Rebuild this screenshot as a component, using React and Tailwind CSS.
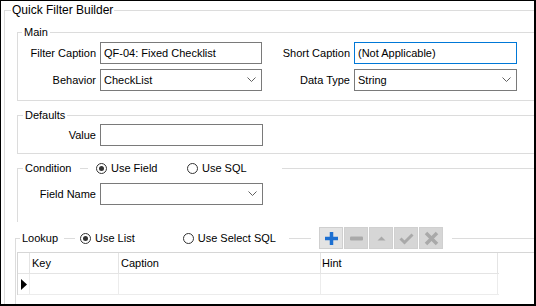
import React from "react";

const line = "h-px bg-[#dcdcdc] shrink-0";

const Radio = ({ checked, label, className = "" }) => (
  <span className={`flex items-center shrink-0 whitespace-nowrap ${className}`}>
    <span className="w-[11px] h-[11px] rounded-full border border-[#333] flex items-center justify-center bg-white">
      {checked && <span className="w-[5px] h-[5px] rounded-full bg-[#333]" />}
    </span>
    <span className="ml-[4px]">{label}</span>
  </span>
);

const Chevron = () => (
  <svg width="9" height="6" viewBox="0 0 9 6" className="mr-[5px]">
    <path d="M0.5 0.5 L4.5 4.5 L8.5 0.5" fill="none" stroke="#606060" strokeWidth="1" />
  </svg>
);

const Edit = ({ value = "", width, focused, combo }) => (
  <div
    className={`h-[22px] flex items-center justify-between bg-white border ${
      focused ? "border-[#0078d7]" : "border-[#7a7a7a]"
    } ${width}`}
  >
    <span className="pl-[3px] whitespace-nowrap">{value}</span>
    {combo && <Chevron />}
  </div>
);

const ToolButton = ({ children, active }) => (
  <div
    className={`w-[24px] h-[22px] flex items-center justify-center border ${
      active ? "bg-[#e3e3e3] border-[#cfcfcf]" : "bg-[#d6d6d6] border-[#d0d0d0]"
    }`}
  >
    {children}
  </div>
);

export default function App() {
  return (
    <div
      className="w-[536px] h-[306px] overflow-hidden bg-white border-l border-t border-r-2 border-b-2 border-black text-[11px] text-black"
      style={{ fontFamily: '"Liberation Sans", Arial, sans-serif' }}
    >
      {/* Quick Filter Builder */}
      <fieldset className="ml-[3px] mt-px w-[600px] h-[320px] border border-[#dcdcdc]">
        <legend className="ml-[6px] px-px h-4 leading-4 text-[12px]">Quick Filter Builder</legend>

        {/* Main */}
        <fieldset className="ml-[12px] mt-[6px] w-[560px] border border-[#dcdcdc] pt-[2px] pb-[9px]">
          <legend className="ml-[4px] px-[2px] h-4 leading-4">Main</legend>
          <div className="flex flex-col gap-[5px]">
            <div className="flex items-center">
              <span className="w-[78px] text-right">Filter Caption</span>
              <span className="ml-[4px]"><Edit width="w-[162px]" value="QF-04: Fixed Checklist" /></span>
              <span className="w-[88px] text-right">Short Caption</span>
              <span className="ml-[4px]"><Edit width="w-[163px]" value="(Not Applicable)" focused /></span>
            </div>
            <div className="flex items-center">
              <span className="w-[78px] text-right">Behavior</span>
              <span className="ml-[4px]"><Edit width="w-[162px]" value="CheckList" combo /></span>
              <span className="w-[88px] text-right">Data Type</span>
              <span className="ml-[4px]"><Edit width="w-[163px]" value="String" combo /></span>
            </div>
          </div>
        </fieldset>

        {/* Defaults */}
        <fieldset className="ml-[12px] mt-[6px] w-[560px] border border-[#dcdcdc] pt-px pb-[7px]">
          <legend className="ml-[5px] px-[2px] h-4 leading-4">Defaults</legend>
          <div className="flex items-center">
            <span className="w-[78px] text-right">Value</span>
            <span className="ml-[4px]"><Edit width="w-[163px]" /></span>
          </div>
        </fieldset>

        {/* Condition */}
        <fieldset className="ml-[12px] mt-[6px] w-[560px] border border-b-0 border-[#dcdcdc] pt-[7px] pb-[17px]">
          <legend className="ml-[5px] pl-[2px] h-4 leading-4">
            <div className="flex items-center">
              <span className="w-[53px] shrink-0">Condition</span>
              <span className={`${line} w-[8px] ml-[2px]`} />
              <Radio checked label="Use Field" className="ml-[8px] w-[91px]" />
              <Radio label="Use SQL" className="w-[95px]" />
            </div>
          </legend>
          <div className="flex items-center">
            <span className="w-[78px] text-right">Field Name</span>
            <span className="ml-[4px]"><Edit width="w-[163px]" combo /></span>
          </div>
        </fieldset>

        {/* Lookup */}
        <fieldset className="ml-[10px] mt-[5px] w-[560px] h-[80px] border border-[#dcdcdc]">
          <legend className="ml-[4px] pl-[2px] pr-[9px]">
            <div className="flex items-center h-[22px]">
              <span className="w-[40px] shrink-0">Lookup</span>
              <span className={`${line} w-[11px] ml-[2px]`} />
              <Radio checked label="Use List" className="ml-[5px] w-[103px]" />
              <Radio label="Use Select SQL" className="w-[93px]" />
              <span className={`${line} w-[22px] ml-[13px]`} />
              <div className="flex gap-px ml-[8px] shrink-0">
                <ToolButton active>
                  <svg width="15" height="15" viewBox="0 0 15 15">
                    <path d="M7.5 1 V14 M1 7.5 H14" stroke="#1c6fd1" strokeWidth="3.5" />
                  </svg>
                </ToolButton>
                <ToolButton>
                  <svg width="15" height="15" viewBox="0 0 15 15">
                    <rect x="1" y="5.5" width="13" height="4" rx="1" fill="#a9a9a9" />
                  </svg>
                </ToolButton>
                <ToolButton>
                  <svg width="15" height="15" viewBox="0 0 15 15">
                    <path d="M3.5 9.5 L7.5 5.5 L11.5 9.5 Z" fill="#a9a9a9" />
                  </svg>
                </ToolButton>
                <ToolButton>
                  <svg width="15" height="15" viewBox="0 0 15 15">
                    <path d="M1.5 7.5 L5.5 11.5 L13.5 3.5" fill="none" stroke="#a9a9a9" strokeWidth="3" />
                  </svg>
                </ToolButton>
                <ToolButton>
                  <svg width="15" height="15" viewBox="0 0 15 15">
                    <path d="M2 2 L13 13 M13 2 L2 13" stroke="#a9a9a9" strokeWidth="3.5" />
                  </svg>
                </ToolButton>
              </div>
            </div>
          </legend>

          {/* Grid */}
          <div className="ml-px mt-[3px] border-t border-l border-[#d6d6d6]">
            <div className="flex h-[21px] w-[481px] border-b border-[#e4e4e4]">
              <div className="w-[12px] border-r border-[#e4e4e4]" />
              <div className="w-[89px] pl-[2px] border-r border-[#e4e4e4] flex items-center">Key</div>
              <div className="w-[202px] pl-[2px] border-r border-[#e4e4e4] flex items-center">Caption</div>
              <div className="w-[177px] pl-[1px] border-r border-[#e4e4e4] flex items-center">Hint</div>
            </div>
            <div className="flex h-[21px] w-[481px] border-b border-[#ececec]">
              <div className="w-[12px] border-r border-[#ececec] flex items-center justify-center">
                <svg width="6" height="11" viewBox="0 0 6 11">
                  <path d="M0 0 L6 5.5 L0 11 Z" fill="#000" />
                </svg>
              </div>
              <div className="w-[89px] border-r border-[#ececec]" />
              <div className="w-[202px] border-r border-[#ececec]" />
              <div className="w-[177px] border-r border-[#ececec]" />
            </div>
          </div>
        </fieldset>
      </fieldset>
    </div>
  );
}
